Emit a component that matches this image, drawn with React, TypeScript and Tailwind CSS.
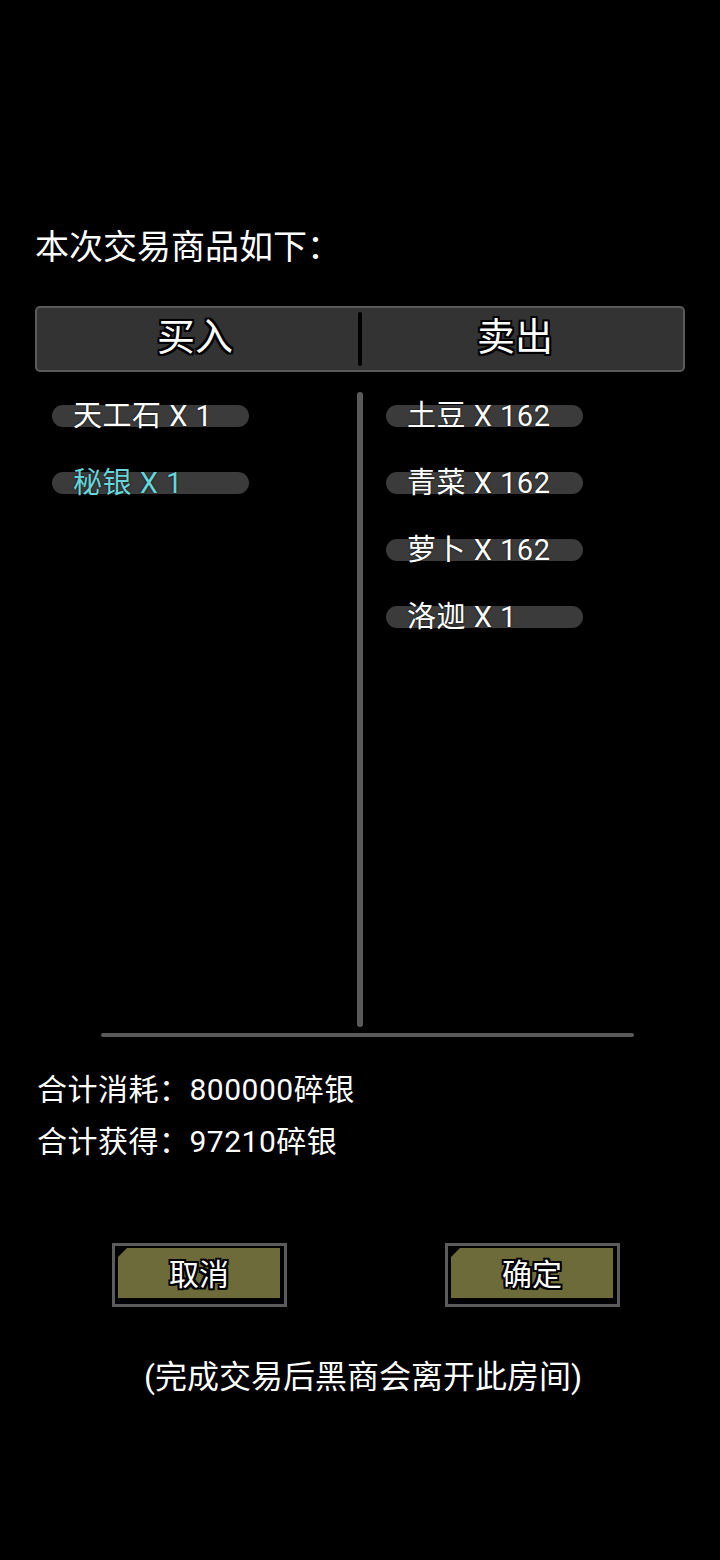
const items = {
  buy: [
    { name: "天工石 X 1", color: "text-white" },
    { name: "秘银 X 1", color: "text-[#66d6db]" },
  ],
  sell: [
    { name: "土豆 X 162", color: "text-white" },
    { name: "青菜 X 162", color: "text-white" },
    { name: "萝卜 X 162", color: "text-white" },
    { name: "洛迦 X 1", color: "text-white" },
  ],
};

const outline =
  "[text-shadow:-2px_-2px_0_#000,2px_-2px_0_#000,-2px_2px_0_#000,2px_2px_0_#000,0_2px_0_#000,0_-2px_0_#000,2px_0_0_#000,-2px_0_0_#000]";

function Pill({ name, color }: { name: string; color: string }) {
  return (
    <div className="w-[197px] h-[22px] rounded-full bg-[#3b3b3b] flex items-center">
      <span
        className={`ml-[21px] mt-[1px] text-[29px] leading-none whitespace-nowrap tracking-[0.5px] ${color} [text-shadow:0_0_2px_#000]`}
      >
        {name}
      </span>
    </div>
  );
}

function GameButton({ label }: { label: string }) {
  return (
    <div className="w-[175px] h-[64px] border-[3px] border-[#5b5b5b] bg-black pt-[2px] pl-[3px] pr-[4px] pb-[6px]">
      <div className="w-full h-full bg-[#6e6b3a] [clip-path:polygon(9px_0,100%_0,100%_100%,0_100%,0_9px)] flex items-center justify-center">
        <span className={`mt-[4px] text-[30px] leading-none text-white ${outline}`}>
          {label}
        </span>
      </div>
    </div>
  );
}

export default function App() {
  return (
    <div className="w-[720px] h-[1560px] bg-black text-white font-['Roboto','Noto_Sans_CJK_SC',sans-serif] overflow-hidden">
      <div className="pt-[227px] px-[35px]">
        {/* Title */}
        <h1 className="text-[34px] leading-[40px] font-normal">
          本次交易商品如下：
        </h1>

        {/* Header bar */}
        <div className="mt-[39px] h-[66px] rounded-[5px] border-2 border-[#5a5a5a] bg-[#333] flex items-center">
          <div className="w-[321px] flex justify-center pr-[5px]">
            <span className={`-mt-[4px] text-[38px] leading-none ${outline}`}>买入</span>
          </div>
          <div className="w-[4px] h-[54px] bg-black rounded-sm" />
          <div className="flex-1 flex justify-center pr-[15px]">
            <span className={`-mt-[4px] text-[38px] leading-none ${outline}`}>卖出</span>
          </div>
        </div>

        {/* Lists */}
        <div className="flex">
          <div className="w-[322px] pt-[33px] pl-[17px] flex flex-col gap-[45px]">
            {items.buy.map((it) => (
              <Pill key={it.name} {...it} />
            ))}
          </div>
          <div className="w-[6px] mt-[20px] h-[635px] rounded-full bg-[#5a5a5a]" />
          <div className="flex-1 pt-[33px] pl-[23px] flex flex-col gap-[45px]">
            {items.sell.map((it) => (
              <Pill key={it.name} {...it} />
            ))}
          </div>
        </div>
        <div className="mt-[6px] ml-[66px] w-[533px] h-[4px] rounded-full bg-[#5a5a5a]" />

        {/* Totals */}
        <div className="mt-[27px] ml-[2px] text-[30px] leading-[52px] tracking-[0.5px]">
          <p>合计消耗：800000碎银</p>
          <p>合计获得：97210碎银</p>
        </div>

        {/* Buttons */}
        <div className="mt-[75px] flex pl-[77px] gap-[158px]">
          <GameButton label="取消" />
          <GameButton label="确定" />
        </div>

        {/* Footer */}
        <p className="mt-[50px] text-center text-[32px] leading-[40px] pl-[6px]">
          (完成交易后黑商会离开此房间)
        </p>
      </div>
    </div>
  );
}
